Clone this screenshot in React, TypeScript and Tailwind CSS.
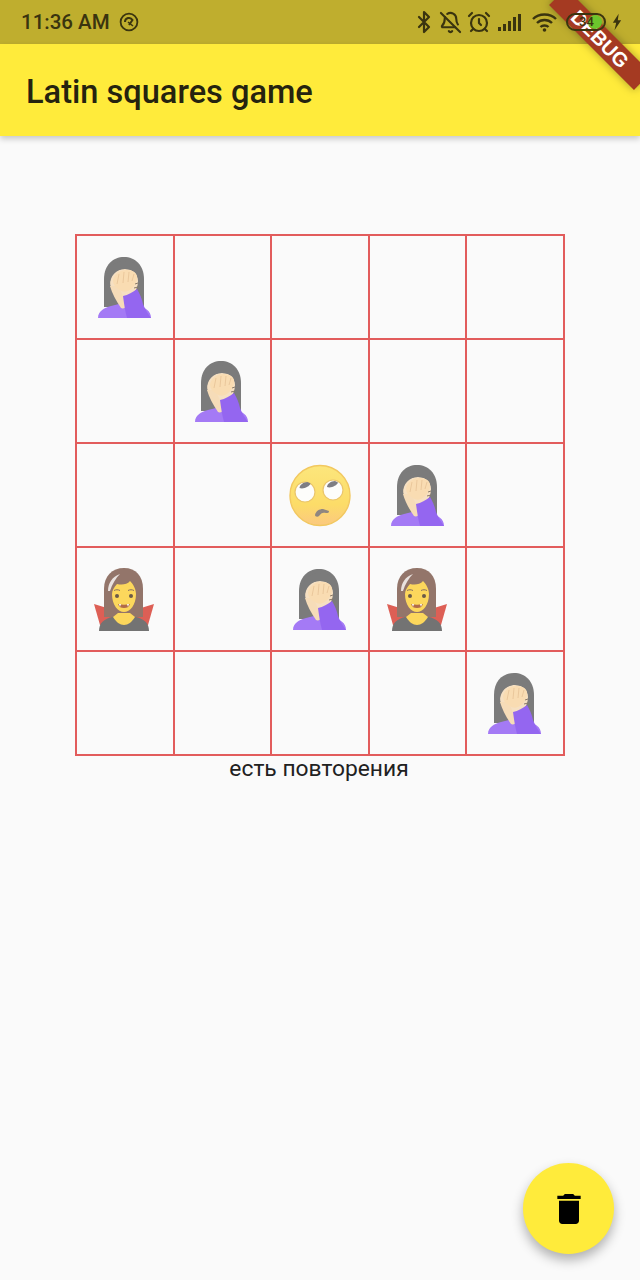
import { AlarmClock, BellOff, Bluetooth } from 'lucide-react';
import { MdDelete } from 'react-icons/md';

type Kind = 'palm' | 'roll' | 'vamp' | null;

const board: Kind[][] = [
  ['palm', null, null, null, null],
  [null, 'palm', null, null, null],
  [null, null, 'roll', 'palm', null],
  ['vamp', null, 'palm', 'vamp', null],
  [null, null, null, null, 'palm'],
];

function Facepalm() {
  return (
    <svg viewBox="0 0 64 64" className="w-16 h-16">
      {/* hair */}
      <path d="M11 52V24C11 10 20 2 31 2s20 8 20 22v28z" fill="#7b7b7b" />
      {/* body */}
      <path d="M5 63c0-7 6-10 13-12l12-3 14 2c8 2 14 6 14 13z" fill="#a47af5" />
      {/* face and neck */}
      <path d="M17 27c0-7 6-13 15-13s13 5 13 12c0 8-5 15-10 18v6c-3 2-7 2-9-1v-7c-5-4-9-9-9-15z" fill="#f6e0c2" />
      {/* hair fringe */}
      <path d="M17 30c0-9 6-16 15-16 6 0 11 3 13 9l4-3C47 10 40 6 31 6S14 12 13 26z" fill="#7b7b7b" />
      <path d="M17 31c2 7 6 15 11 22 2 1 5 0 6-3-3-6-6-13-8-19z" fill="#f6dcb8" />
      {/* hand */}
      <path d="M20 25c2-7 8-10 14-10 6 0 10 3 10 7 0 6-4 12-9 14-3 1-6 1-8-1-4-2-7-5-7-10z" fill="#f9dcb2" />
      <path d="M26 19l-2 10M31 17l-1 11M36 17l-1 10M41 19l-2 7" stroke="#e6c196" strokeWidth="0.8" fill="none" />
      <path d="M42 29l3-1M41 33l4-1" stroke="#8a7a68" strokeWidth="1" fill="none" />
      {/* arm */}
      <path d="M30 41c5-1 10-4 14-7 3 5 5 10 6 15 2 5 5 10 8 14H34c-2-7-3-15-4-22z" fill="#9466f0" />
    </svg>
  );
}

function RollingEyes() {
  return (
    <svg viewBox="0 0 64 64" className="w-16 h-16">
      <defs>
        <linearGradient id="rollFace" x1="0" y1="0" x2="0" y2="1">
          <stop offset="0" stopColor="#fce67c" />
          <stop offset="0.65" stopColor="#fcdc68" />
          <stop offset="1" stopColor="#fbc880" />
        </linearGradient>
      </defs>
      <circle cx="32" cy="32.5" r="30" fill="url(#rollFace)" stroke="#f2c860" strokeWidth="1.4" />
      <circle cx="17" cy="29" r="10" fill="#fdfdfb" stroke="#eac56c" strokeWidth="1.2" />
      <circle cx="45" cy="27" r="10" fill="#fdfdfb" stroke="#eac56c" strokeWidth="1.2" />
      <path d="M11.5 25c0-3 4-6 8-6l3 1.5c-1 3-7 6-11 4.5z" fill="#7e7e84" />
      <path d="M39 24c0-3 4-6 8-6l3 1.5c-1 3-7 6-11 4.5z" fill="#7e7e84" />
      <path d="M27 52c1-4 4-6 8-6l6 2c0 2-1 2-3 2-3-1-5 0-7 3-1 1-4 1-4-1z" fill="#8f8680" />
    </svg>
  );
}

function Vampire() {
  return (
    <svg viewBox="0 0 64 64" className="w-16 h-16">
      {/* cape */}
      <path d="M1 37l13 4 6 9-8 8H7z" fill="#dd5f55" />
      <path d="M61 37l-13 4-6 9 8 8h5z" fill="#dd5f55" />
      {/* hair */}
      <path d="M11 50V22C11 9 19 1 31 1s19 8 19 21v28z" fill="#93756a" />
      {/* body */}
      <path d="M6 64c0-8 5-12 13-14h24c8 2 13 6 13 14z" fill="#737373" />
      <path d="M20 50c3 5 7 8 11 8s8-3 11-8l-5-4H25z" fill="#fcd75c" />
      {/* face */}
      <path d="M19 27c0-3 2-7 5-10 4 1 10 1 13-3 3 3 6 8 6 13 0 11-6 18-12 18s-12-7-12-18z" fill="#fcd75c" />
      {/* highlight */}
      <path d="M15 24c0-8 4-14 12-17-4 4-8 10-10 17z" fill="#e9e2df" />
      <circle cx="24" cy="29" r="2" fill="#6b5a48" />
      <circle cx="38" cy="29" r="2" fill="#6b5a48" />
      <path d="M21 23.5c2-1 4-1 6 0M35 23.5c2-1 4-1 6 0" stroke="#8a6f5e" strokeWidth="1" fill="none" />
      <path d="M25 37c4 1 8 1 12 0-1 3-3 4-6 4s-5-1-6-4z" fill="#b06a4a" />
      <path d="M26 37h2l-1 3zM34 37h2l-1 3z" fill="#fff" />
    </svg>
  );
}

function Emoji({ kind }: { kind: Kind }) {
  if (kind === 'palm') return <Facepalm />;
  if (kind === 'roll') return <RollingEyes />;
  if (kind === 'vamp') return <Vampire />;
  return null;
}

function StatusBar() {
  return (
    <div className="h-[44px] bg-[#bfae2e] flex items-center pl-[21px] text-[#3a340f] shrink-0">
      <span className="text-[20.5px] font-medium leading-none">11:36 AM</span>
      <svg viewBox="0 0 20 20" className="w-5 h-5 ml-[9px]" fill="none" stroke="currentColor">
        <circle cx="10" cy="10" r="8.4" strokeWidth="1.8" />
        <path d="M6 10a4 4 0 0 1 7.5-2L10 13" strokeWidth="2" />
        <path d="M9 10l5 4" strokeWidth="1.6" />
      </svg>
      {/* icons sit above the debug banner */}
      <div className="ml-auto flex items-center relative z-30">
        <Bluetooth size={24} strokeWidth={2.2} />
        <BellOff size={23} strokeWidth={2.2} className="ml-[3px]" />
        <AlarmClock size={24} strokeWidth={2.2} className="ml-[5px]" />
        <svg viewBox="0 0 24 20" className="w-[24px] h-5 ml-[7px]" fill="currentColor">
          <rect x="0" y="15" width="3" height="4" />
          <rect x="5" y="12" width="3" height="7" />
          <rect x="10" y="9" width="3" height="10" />
          <rect x="15" y="5" width="3" height="14" />
          <rect x="20" y="2" width="3" height="17" />
        </svg>
        <svg viewBox="0 0 25 20" className="w-[25px] h-5 ml-[10px]" fill="none" stroke="currentColor" strokeWidth="2.4">
          <path d="M1 7c6-6 17-6 23 0" />
          <path d="M5 11c4-4 11-4 15 0" />
          <path d="M8.5 15c2-2 6-2 8 0" />
          <circle cx="12.5" cy="18" r="1.8" fill="currentColor" stroke="none" />
        </svg>
        <div className="relative w-[40px] h-[18px] rounded-full border-2 border-[#3a340f] ml-[9px] overflow-hidden">
          <div className="absolute left-[20px] top-0 bottom-0 w-[14px] bg-[#6cc52c] rounded-full" />
          <span className="absolute left-[11px] top-[-1px] text-[13px] font-medium leading-[16px]">34</span>
        </div>
        <svg viewBox="0 0 12 20" className="w-[10px] h-[20px] ml-[6px] mr-[18px]" fill="currentColor">
          <path d="M8 0L1 11h4l-2 9 8-12H7z" />
        </svg>
      </div>
    </div>
  );
}

export default function App() {
  return (
    <div
      className="relative w-[640px] h-[1280px] overflow-hidden bg-[#fafafa] flex flex-col"
      style={{ fontFamily: 'Roboto, sans-serif' }}
    >
      <StatusBar />

      {/* App bar */}
      <div className="h-[92px] bg-[#ffeb3b] flex items-center pl-[26px] pt-[4px] shadow-[0_3px_6px_rgba(0,0,0,0.2)] shrink-0 z-10">
        <h1 className="text-[32.6px] font-medium text-[#25230f] leading-none">Latin squares game</h1>
      </div>

      {/* Board */}
      <div className="mt-[98px] w-[490px] ml-[75px] border-t-2 border-l-2 border-[#e25c5c]">
        {board.map((row, r) => (
          <div key={r} className="grid grid-cols-5 h-[104px]">
            {row.map((kind, c) => (
              <div key={c} className="border-r-2 border-b-2 border-[#e25c5c] flex items-center justify-center">
                <Emoji kind={kind} />
              </div>
            ))}
          </div>
        ))}
      </div>
      <p className="text-center text-[22.8px] leading-[26px] text-[#212121] pr-[2px]">есть повторения</p>

      {/* Trash button */}
      <button className="absolute left-[523px] top-[1163px] w-[91px] h-[91px] rounded-full bg-[#ffeb3b] flex items-center justify-center shadow-[0_6px_12px_rgba(0,0,0,0.3)]">
        <MdDelete size={40} className="text-black" />
      </button>

      {/* Debug banner */}
      <div className="absolute left-[540px] top-[27px] w-[120px] h-[24px] rotate-45 bg-[#a53a22] shadow-[0_0_8px_rgba(0,0,0,0.35)] flex items-center justify-center z-20">
        <span className="text-white text-[20px] font-bold leading-none" style={{ fontFamily: '"Liberation Sans", sans-serif' }}>
          DEBUG
        </span>
      </div>
    </div>
  );
}
